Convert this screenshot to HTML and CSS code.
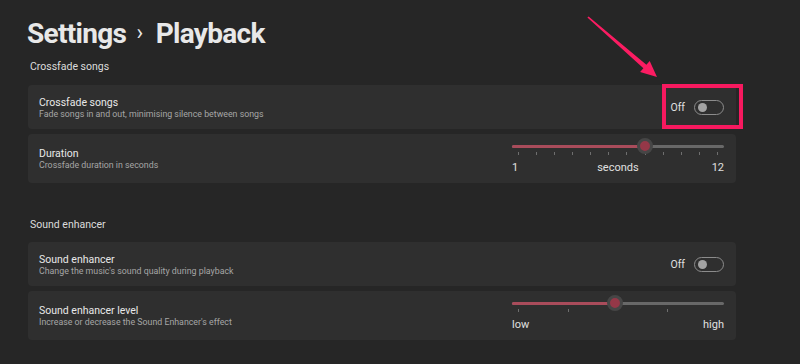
FILE: index.html
```html
<!DOCTYPE html>
<html lang="en">
<head>
    <meta charset="UTF-8">
    <meta name="viewport" content="width=device-width, initial-scale=1.0">
    <title>Settings - Playback</title>
    <link rel="stylesheet" href="styles.css">
</head>
<body>
    <div class="page">
        <h1 class="crumbs">Settings <span class="chev">&rsaquo;</span> Playback</h1>

        <!-- Crossfade -->
        <h2 class="section-title">Crossfade songs</h2>
        <div class="group">
            <div class="row">
                <div class="text">
                    <div class="row-title">Crossfade songs</div>
                    <div class="row-sub">Fade songs in and out, minimising silence between songs</div>
                </div>
                <div class="control">
                    <span class="state">Off</span>
                    <span class="toggle"><span class="knob"></span></span>
                </div>
                <span class="highlight"></span>
            </div>
            <div class="row row-tall">
                <div class="text">
                    <div class="row-title">Duration</div>
                    <div class="row-sub">Crossfade duration in seconds</div>
                </div>
                <div class="slider">
                    <div class="track">
                        <div class="fill" style="width: 62.5%"></div>
                        <div class="thumb" style="left: 62.5%"></div>
                    </div>
                    <div class="ticks">
                        <i></i><i></i><i></i><i></i><i></i><i></i><i></i><i></i><i></i><i></i><i></i><i></i>
                    </div>
                    <div class="scale">
                        <span>1</span><span class="mid">seconds</span><span>12</span>
                    </div>
                </div>
            </div>
        </div>

        <!-- Sound enhancer -->
        <h2 class="section-title second">Sound enhancer</h2>
        <div class="group">
            <div class="row">
                <div class="text">
                    <div class="row-title">Sound enhancer</div>
                    <div class="row-sub">Change the music's sound quality during playback</div>
                </div>
                <div class="control">
                    <span class="state">Off</span>
                    <span class="toggle"><span class="knob"></span></span>
                </div>
            </div>
            <div class="row row-tall">
                <div class="text">
                    <div class="row-title">Sound enhancer level</div>
                    <div class="row-sub">Increase or decrease the Sound Enhancer's effect</div>
                </div>
                <div class="slider">
                    <div class="track">
                        <div class="fill" style="width: 48.6%"></div>
                        <div class="thumb" style="left: 48.6%"></div>
                    </div>
                    <div class="ticks">
                        <i></i><i></i><i class="hidden"></i><i></i><i class="hidden"></i>
                    </div>
                    <div class="scale">
                        <span>low</span><span>high</span>
                    </div>
                </div>
            </div>
        </div>
    </div>

    <!-- annotation arrow -->
    <svg class="arrow" width="800" height="364" viewBox="0 0 800 364">
        <polygon fill="#fb1c62" points="587.4,17.6 643.4,68.2 640.1,72 657,77 649.7,61 646.4,64.8 588.6,16.4"/>
    </svg>
</body>
</html>
```

FILE: styles.css
```css
body {
    font-family: Roboto, "Noto Sans", sans-serif;
    background-color: #262626;
    color: #e6e6e6;
    margin: 0;
    padding: 0;
}
.page {
    padding: 16px 64px 0 27px;
}
.crumbs {
    font-size: 28px;
    font-weight: 700;
    line-height: 36px;
    margin: 0;
    color: #e8e8e8;
    letter-spacing: -0.7px;
}
.chev {
    font-weight: 400;
    font-size: 22px;
    margin: 0 7px 0 4px;
    position: relative;
    top: -3px;
}
.section-title {
    font-size: 10.5px;
    font-weight: 400;
    line-height: 14px;
    margin: 6px 0 11px 3px;
    color: #dcdcdc;
}
.section-title.second {
    margin-top: 35px;
    margin-bottom: 10px;
}
.group {
    display: flex;
    flex-direction: column;
    gap: 5px;
    margin-left: 1px;
}
.row {
    position: relative;
    display: flex;
    align-items: center;
    justify-content: space-between;
    min-height: 44px;
    padding: 0 12px 0 11px;
    box-sizing: border-box;
    background-color: #2f2f2f;
    border-radius: 4px;
}
.row-tall {
    min-height: 49px;
}
.text {
    padding-top: 1px;
}
.row-title {
    font-size: 10.5px;
    line-height: 13px;
    color: #e8e8e8;
}
.row-sub {
    font-size: 8.8px;
    line-height: 11px;
    color: #a6a6a6;
}
.control {
    display: flex;
    align-items: center;
    gap: 9px;
}
.state {
    font-size: 10.5px;
    color: #e0e0e0;
}
.toggle {
    width: 25px;
    height: 13px;
    border: 1px solid #8c8c8c;
    border-radius: 8px;
    display: flex;
    align-items: center;
    padding-left: 3px;
}
.knob {
    width: 9px;
    height: 9px;
    border-radius: 50%;
    background-color: #a3a3a3;
}
.highlight {
    position: absolute;
    right: -7px;
    top: -1px;
    width: 81px;
    bottom: 0;
    border: 4px solid #f7195f;
    box-sizing: border-box;
}
.slider {
    width: 212px;
    padding-top: 2px;
}
.track {
    position: relative;
    height: 3px;
    background-color: #686868;
    border-radius: 2px;
}
.fill {
    height: 3px;
    background-color: #a94c5b;
    border-radius: 2px;
}
.thumb {
    position: absolute;
    top: 50%;
    width: 10px;
    height: 10px;
    margin: -8px 0 0 -8px;
    border-radius: 50%;
    background-color: #953848;
    border: 3px solid #464646;
}
.ticks {
    display: flex;
    justify-content: space-between;
    padding: 0 6px;
    margin-top: 4px;
    height: 3px;
}
.ticks i {
    width: 1px;
    height: 3px;
    background-color: #6e6e6e;
}
.ticks i.hidden {
    background-color: transparent;
}
.scale {
    display: flex;
    justify-content: space-between;
    font-size: 11px;
    line-height: 14px;
    margin-top: 6px;
    color: #e0e0e0;
}
.scale .mid {
    margin-left: 6px;
}
.arrow {
    position: absolute;
    top: 0;
    left: 0;
    pointer-events: none;
}
```
